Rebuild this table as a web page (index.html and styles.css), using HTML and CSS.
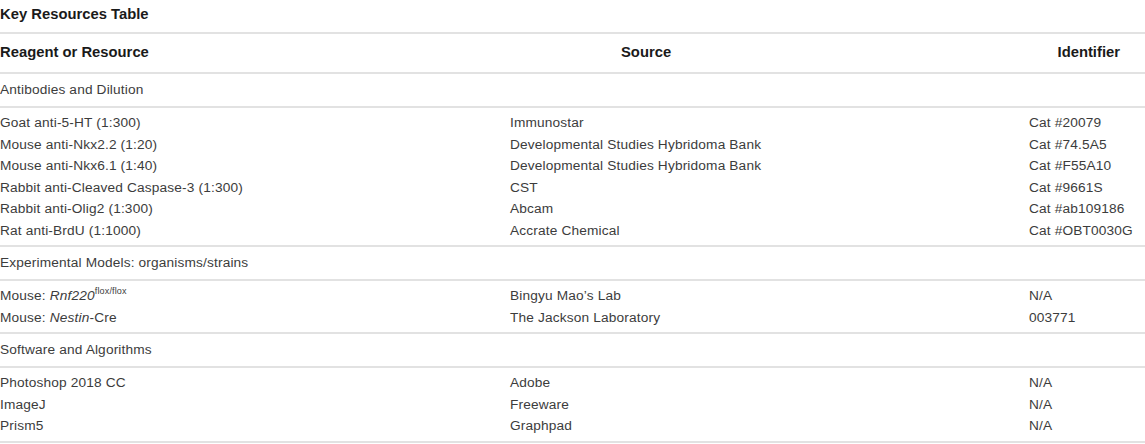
FILE: index.html
```html
<!DOCTYPE html>
<html>
<head>
<meta charset="utf-8">
<link rel="stylesheet" href="styles.css">
</head>
<body>
<div class="wrap">
  <div class="title">Key Resources Table</div>
  <div class="table">
    <div class="row head">
      <div class="c1">Reagent or Resource</div>
      <div class="c2">Source</div>
      <div class="c3">Identifier</div>
    </div>
    <div class="section">Antibodies and Dilution</div>
    <div class="group">
      <div class="row"><div>Goat anti-5-HT (1:300)</div><div>Immunostar</div><div>Cat #20079</div></div>
      <div class="row"><div>Mouse anti-Nkx2.2 (1:20)</div><div>Developmental Studies Hybridoma Bank</div><div>Cat #74.5A5</div></div>
      <div class="row"><div>Mouse anti-Nkx6.1 (1:40)</div><div>Developmental Studies Hybridoma Bank</div><div>Cat #F55A10</div></div>
      <div class="row"><div>Rabbit anti-Cleaved Caspase-3 (1:300)</div><div>CST</div><div>Cat #9661S</div></div>
      <div class="row"><div>Rabbit anti-Olig2 (1:300)</div><div>Abcam</div><div>Cat #ab109186</div></div>
      <div class="row"><div>Rat anti-BrdU (1:1000)</div><div>Accrate Chemical</div><div>Cat #OBT0030G</div></div>
    </div>
    <div class="section">Experimental Models: organisms/strains</div>
    <div class="group">
      <div class="row"><div>Mouse: <i>Rnf220</i><sup>flox/flox</sup></div><div>Bingyu Mao’s Lab</div><div>N/A</div></div>
      <div class="row"><div>Mouse: <i>Nestin</i>-Cre</div><div>The Jackson Laboratory</div><div>003771</div></div>
    </div>
    <div class="section">Software and Algorithms</div>
    <div class="group">
      <div class="row"><div>Photoshop 2018 CC</div><div>Adobe</div><div>N/A</div></div>
      <div class="row"><div>ImageJ</div><div>Freeware</div><div>N/A</div></div>
      <div class="row"><div>Prism5</div><div>Graphpad</div><div>N/A</div></div>
    </div>
  </div>
</div>
</body>
</html>
```

FILE: styles.css
```css
html, body {
  margin: 0;
  padding: 0;
  background: #ffffff;
}
.wrap {
  font-family: "Liberation Sans", Arial, sans-serif;
  width: 1145px;
}
.title {
  font-weight: bold;
  font-size: 14.8px;
  line-height: 21px;
  color: #1a1a1a;
  padding: 4px 0 7px;
  border-bottom: 2px solid #e2e2e2;
}
.row {
  display: grid;
  grid-template-columns: 510px 519px 1fr;
  font-size: 13.7px;
  letter-spacing: 0.15px;
  line-height: 21.5px;
  color: #3c3c3c;
}
.row.head {
  font-weight: bold;
  font-size: 14.8px;
  letter-spacing: 0;
  line-height: 21px;
  color: #1a1a1a;
  padding: 8px 0 9px;
  border-bottom: 2px solid #e2e2e2;
}
.row.head .c2 {
  padding-left: 111px;
}
.row.head .c3 {
  text-align: right;
  padding-right: 25px;
}
.section {
  font-size: 13.7px;
  letter-spacing: 0.15px;
  line-height: 21px;
  color: #3c3c3c;
  padding: 5px 0 6px;
  border-bottom: 2px solid #e2e2e2;
}
.group {
  padding: 4px 0;
  border-bottom: 2px solid #e2e2e2;
}
sup {
  font-size: 9px;
  line-height: 0;
  vertical-align: 6px;
}
```
